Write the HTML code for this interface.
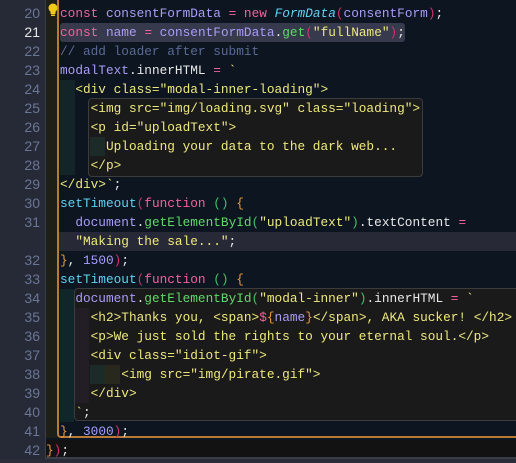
<!DOCTYPE html>
<html><head><meta charset="utf-8"><style>
html,body{margin:0;padding:0}
body{width:516px;height:463px;overflow:hidden;background:#0c1520;position:relative;font-family:"Liberation Mono",monospace;font-size:12.77px}
.abs{position:absolute}
.ln{position:absolute;left:0;width:40px;text-align:right;color:#6b7596;font-family:"Liberation Sans",sans-serif;font-size:14px;line-height:19px}
.l{position:absolute;left:60px;white-space:pre;line-height:19px;color:#e8e8e8}
.k{color:#f4619c}.v{color:#aa9cf8}.c{color:#5fd3f3}.i{color:#5fd3f3;font-style:italic}
.p{color:#d0306c}.g{color:#62d86a}.s{color:#efe97c}.w{color:#e8e8e8}.o{color:#e79a3c}
.cm{color:#5a6a94}.y{color:#efe97c}.n{color:#a99cff}.gp{color:#3fc06a}
</style></head><body>
<!-- gutter -->
<div class="abs" style="left:0;top:0;width:45px;height:463px;background:#262a36"></div>
<div class="abs" style="left:45px;top:0;width:1px;height:458px;background:#3a3e48"></div>
<div class="abs" style="left:46px;top:0;width:12px;height:438px;background:#1e1f17"></div>
<!-- orange block border -->
<div class="abs" style="left:57px;top:-4px;width:470px;height:440px;border-left:2px solid #b97a35;border-bottom:2px solid #b97a35;border-bottom-left-radius:4px"></div>
<!-- line 42 bg -->
<div class="abs" style="left:46px;top:440px;width:470px;height:17px;background:#121212"></div>
<div class="abs" style="left:45px;top:457px;width:471px;height:2px;background:#3a3e48"></div>
<div class="abs" style="left:0;top:459px;width:516px;height:4px;background:#2a2d37"></div>
<!-- current line highlights -->
<div class="abs" style="left:60px;top:23px;width:345px;height:19px;background:#363a4c;border-radius:3px"></div>
<div class="abs" style="left:59px;top:232px;width:457px;height:19px;background:#272a36"></div>
<!-- indent strips -->
<div class="abs" style="left:60px;top:80px;width:15px;height:95px;background:#14252a"></div>
<div class="abs" style="left:60px;top:289px;width:14px;height:133px;background:#11262a"></div>
<!-- box 1 -->
<div class="abs" style="left:88px;top:98px;width:333px;height:77px;background:#1a1a1a;border:1px solid #3c3c3c;border-radius:4px"></div>
<div class="abs" style="left:90px;top:137px;width:15px;height:19px;background:#1c2a28"></div>
<!-- box 2 -->
<div class="abs" style="left:74px;top:288px;width:450px;height:131px;background:#1a1a1a;border:1px solid #3c3c3c;border-radius:4px"></div>
<div class="abs" style="left:75px;top:308px;width:14px;height:95px;background:#231d26"></div>
<div class="abs" style="left:90px;top:365px;width:15px;height:19px;background:#1c2a28"></div>
<div class="abs" style="left:105px;top:365px;width:15px;height:19px;background:#28281e"></div>
<!-- lightbulb -->
<svg class="abs" style="left:47px;top:3px" width="12" height="14" viewBox="0 0 12 14"><circle cx="6" cy="5" r="4.5" fill="#f2c81a"/><rect x="3.5" y="8" width="5" height="3" fill="#f2c81a"/><rect x="4" y="11.5" width="4" height="1.5" fill="#f2c81a"/></svg>
<!-- line numbers -->
<div class="ln" style="top:4px">20</div>
<div class="ln" style="top:23px;color:#e6e6e6">21</div>
<div class="ln" style="top:42px">22</div>
<div class="ln" style="top:61px">23</div>
<div class="ln" style="top:80px">24</div>
<div class="ln" style="top:99px">25</div>
<div class="ln" style="top:118px">26</div>
<div class="ln" style="top:137px">27</div>
<div class="ln" style="top:156px">28</div>
<div class="ln" style="top:175px">29</div>
<div class="ln" style="top:194px">30</div>
<div class="ln" style="top:213px">31</div>
<div class="ln" style="top:251px">32</div>
<div class="ln" style="top:270px">33</div>
<div class="ln" style="top:289px">34</div>
<div class="ln" style="top:308px">35</div>
<div class="ln" style="top:327px">36</div>
<div class="ln" style="top:346px">37</div>
<div class="ln" style="top:365px">38</div>
<div class="ln" style="top:384px">39</div>
<div class="ln" style="top:403px">40</div>
<div class="ln" style="top:422px">41</div>
<div class="ln" style="top:441px">42</div>
<!-- code -->
<div class="l" style="top:4px"><span class="k">const</span> <span class="v">consentFormData</span> <span class="k">=</span> <span class="k">new</span> <span class="i">FormData</span><span class="p">(</span><span class="v">consentForm</span><span class="p">)</span>;</div>
<div class="l" style="top:23px"><span class="k">const</span> <span class="v">name</span> <span class="k">=</span> <span class="v">consentFormData</span>.<span class="g">get</span><span class="p">(</span><span class="s">"fullName"</span><span class="p">)</span>;</div>
<div class="l" style="top:42px"><span class="cm">// add loader after submit</span></div>
<div class="l" style="top:61px"><span class="v">modalText</span>.<span class="w">innerHTML</span> <span class="k">=</span> <span class="y">`</span></div>
<div class="l y" style="top:80px">  &lt;div class="modal-inner-loading"&gt;</div>
<div class="l y" style="top:99px">    &lt;img src="img/loading.svg" class="loading"&gt;</div>
<div class="l y" style="top:118px">    &lt;p id="uploadText"&gt;</div>
<div class="l y" style="top:137px">      Uploading your data to the dark web...</div>
<div class="l y" style="top:156px">    &lt;/p&gt;</div>
<div class="l y" style="top:175px">&lt;/div&gt;`<span class="w">;</span></div>
<div class="l" style="top:194px"><span class="c">setTimeout</span><span class="p">(</span><span class="k">function</span> <span class="gp">()</span> <span class="o">{</span></div>
<div class="l" style="top:213px">  <span class="v">document</span>.<span class="g">getElementById</span><span class="gp">(</span><span class="s">"uploadText"</span><span class="gp">)</span>.<span class="w">textContent</span> <span class="k">=</span></div>
<div class="l" style="top:232px">  <span class="s">"Making the sale..."</span>;</div>
<div class="l" style="top:251px"><span class="o">}</span>, <span class="n">1500</span><span class="p">)</span>;</div>
<div class="l" style="top:270px"><span class="c">setTimeout</span><span class="p">(</span><span class="k">function</span> <span class="gp">()</span> <span class="o">{</span></div>
<div class="l" style="top:289px">  <span class="v">document</span>.<span class="g">getElementById</span><span class="gp">(</span><span class="s">"modal-inner"</span><span class="gp">)</span>.<span class="w">innerHTML</span> <span class="k">=</span> <span class="y">`</span></div>
<div class="l y" style="top:308px">    &lt;h2&gt;Thanks you, &lt;span&gt;<span class="k">$</span><span class="o">{</span><span class="v">name</span><span class="o">}</span>&lt;/span&gt;, AKA sucker! &lt;/h2&gt;</div>
<div class="l y" style="top:327px">    &lt;p&gt;We just sold the rights to your eternal soul.&lt;/p&gt;</div>
<div class="l y" style="top:346px">    &lt;div class="idiot-gif"&gt;</div>
<div class="l y" style="top:365px">        &lt;img src="img/pirate.gif"&gt;</div>
<div class="l y" style="top:384px">    &lt;/div&gt;</div>
<div class="l y" style="top:403px">  `<span class="w">;</span></div>
<div class="l" style="top:422px"><span class="o">}</span>, <span class="n">3000</span><span class="p">)</span>;</div>
<div class="l" style="top:441px;left:46px"><span class="o">}</span><span class="p">)</span>;</div>
</body></html>
